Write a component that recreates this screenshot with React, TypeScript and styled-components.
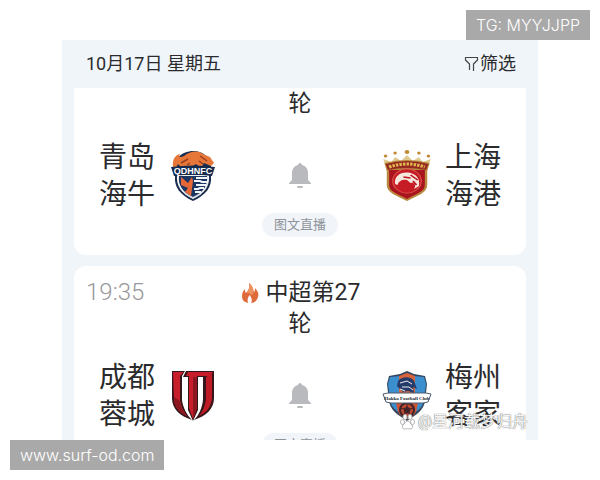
import * as React from 'react'
import styled, { createGlobalStyle } from 'styled-components'

const GlobalStyle = createGlobalStyle`
  * {
    box-sizing: border-box;
  }

  body {
    margin: 0;
    background-color: #fff;
    color: #2b2b2d;
    font-family: Roboto, 'Noto Sans CJK SC', sans-serif;
  }
`

const Page = styled.main`
  position: relative;
  height: 100vh;
  padding: 40px 62px;
  overflow: hidden;
`

const Screen = styled.section`
  position: relative;
  height: 100%;
  padding: 0 12px;
  overflow: hidden;
  background-color: #eff5f9;
`

const TopBar = styled.header`
  display: flex;
  justify-content: space-between;
  align-items: center;
  height: 48px;
  padding: 0 10px 0 12px;
  font-size: 18px;
`

const DateText = styled.time`
  line-height: 24px;
`

const FilterButton = styled.button`
  display: flex;
  align-items: center;
  gap: 1px;
  padding: 0;
  border: 0;
  background: none;
  color: inherit;
  font: inherit;
  line-height: 24px;
  cursor: pointer;
`

const MatchList = styled.div`
  display: flex;
  flex-direction: column;
  gap: 11px;
`

const Card = styled.article<{ $cut?: boolean }>`
  padding: ${({ $cut }) => ($cut ? '0 12px 18px' : '11px 12px 18px')};
  border-radius: ${({ $cut }) => ($cut ? '0 0 12px 12px' : '12px')};
  background-color: #fff;
`

const CardTop = styled.div`
  display: grid;
  grid-template-columns: 1fr 128px 1fr;
  line-height: 31px;
`

const Kickoff = styled.time`
  color: #98989a;
  font-size: 24px;
  font-weight: 300;
`

const Round = styled.h2`
  grid-column: 2;
  margin: 0;
  font-size: 23px;
  font-weight: 400;
  text-align: center;

  svg {
    margin-right: 6px;
    vertical-align: -4px;
  }
`

const Teams = styled.div`
  display: grid;
  grid-template-columns: 1fr 76px 1fr;
  align-items: center;
  margin-top: 20px;
`

const Team = styled.div<{ $away?: boolean }>`
  display: flex;
  flex-direction: ${({ $away }) => ($away ? 'row-reverse' : 'row')};
  align-items: center;
  gap: 12px;
  padding: 0 12px;
`

const TeamName = styled.span`
  width: 58px;
  font-size: 28px;
  line-height: 37px;
  text-align: center;
`

const BellButton = styled.button`
  justify-self: center;
  padding: 0;
  border: 0;
  background: none;
  line-height: 0;
  cursor: pointer;
`

const LiveButton = styled.button`
  display: block;
  margin: 0 auto;
  padding: 0 12px;
  border: 0;
  border-radius: 12px;
  background-color: #f1f5f9;
  color: #8e949b;
  font: inherit;
  font-size: 13px;
  line-height: 24px;
  cursor: pointer;
`

const Credit = styled.div`
  position: absolute;
  right: 10px;
  bottom: 8px;
  display: flex;
  align-items: center;
  gap: 3px;
  color: #f4f4f4;
  font-size: 16px;
  line-height: 20px;
  text-shadow: 0 0 1px #777, 0 0 1px #888;
`

const Tag = styled.div<{ $corner: 'top' | 'bottom' }>`
  position: absolute;
  ${({ $corner }) =>
    $corner === 'top' ? 'top: 10px; right: 10px;' : 'bottom: 10px; left: 10px;'}
  padding: 0 10px;
  background-color: #a9a9a9;
  color: #fff;
  font-family: Inter, 'Liberation Sans', sans-serif;
  font-size: 16px;
  font-weight: 300;
  line-height: 30px;
`

const FilterIcon = () => (
  <svg width="15" height="16" viewBox="0 0 15 16" fill="none" stroke="#444" strokeWidth="1.2">
    <path d="M5.5 14V8L1.5 4V1.5H13.5V4L9.5 8V15" strokeLinejoin="round" />
  </svg>
)

const FlameIcon = () => (
  <svg width="20" height="22" viewBox="0 0 20 22">
    <path
      d="M9 1C13 4 13 7 14 10C15 9 15 8 15 6C18 9 19 12 18 15C17 19 14 21 11 21C13 18 11 16 10 13C8 15 7 17 8 21C4 20 2 18 2 14C2 11 3 9 5 7C5 9 5 10 6 11C9 8 10 5 9 1Z"
      fill="#df6b3c"
    />
    <path d="M9 1C13 4 13 7 14 10L12 13L9 11L6 11C9 8 10 5 9 1Z" fill="#ee9262" />
  </svg>
)

const BellIcon = () => (
  <svg width="24" height="26" viewBox="0 0 24 26" fill="#b9babd">
    <path d="M12 0C13 0 14 1 14 2C18 3 20 6 20 10V17L23 20V21H1V20L4 17V10C4 6 6 3 10 2C10 1 11 0 12 0Z" />
    <rect x="9" y="23" width="6" height="2" rx="1" />
  </svg>
)

const QingdaoCrest = () => (
  <svg width="50" height="52" viewBox="0 0 50 52">
    <path d="M8 9C14 3 19 1 26 1C34 1 40 6 43 13V26C44 37 38 45 25 51C12 45 6 37 7 26Z" fill="#192c50" />
    <path d="M9 25H41C42 36 37 43 25 49C13 43 8 36 9 25Z" fill="#f5f5f6" />
    <path d="M11 26H39C40 35 36 42 25 47C14 42 10 35 11 26Z" fill="#1d3562" />
    <path
      d="M28 28H39M26 31H32L34 32H39M28 35H38M26 39H30L32 38H36M27 42H33"
      stroke="#f1f4f8"
      strokeWidth="2"
      fill="none"
    />
    <path d="M13 27L20 33L24 27L25 31L23 46L17 42L20 38L13 35Z" fill="#e66837" />
    <path
      d="M5 17C4 10 7 5 12 4C10 7 12 8 16 6C22 1 30 0 35 4L42 7L46 13L43 16L36 13L33 18L28 14L22 18H14L10 14L8 18Z"
      fill="#e77738"
    />
    <path d="M13 13L20 9M19 15L22 13M32 6L39 11M31 11L35 14" stroke="#963d20" strokeWidth="1.5" fill="none" />
    <path d="M3 17Q25 14 47 17L44 26Q25 23 6 26Z" fill="#172b4e" />
    <text x="25" y="24" textAnchor="middle" fill="#fff" fontFamily="Liberation Sans" fontSize="9" fontWeight="700">
      QDHNFC
    </text>
    <path d="M17 44L25 48L33 44" stroke="#cfd4dc" fill="none" />
  </svg>
)

const ShanghaiCrest = () => (
  <svg width="50" height="52" viewBox="2 0 42 52" preserveAspectRatio="none">
    <path d="M5 16L3 9L10 12L13 7L18 11L23 5L28 11L33 7L36 12L43 9L41 16Z" fill="#dfc98e" />
    <g fill="#c28a35">
      <circle cx="5" cy="6" r="1.5" />
      <circle cx="13" cy="3" r="1.5" />
      <circle cx="23" cy="2" r="2" />
      <circle cx="33" cy="3" r="1.5" />
      <circle cx="41" cy="6" r="1.5" />
    </g>
    <path d="M4 13Q23 7 42 13L40 21V35C40 43 31 46 23 51C15 46 6 43 6 35V21Z" fill="#b8893e" />
    <path d="M8 20H38V35C38 42 30 44 23 49C16 44 8 42 8 35Z" fill="#a9141e" />
    <path d="M5 14Q23 8 41 14L39 20Q23 16 7 20Z" fill="#962a20" />
    <path d="M8 17Q23 11 38 17" stroke="#e2b851" strokeWidth="3" strokeDasharray="2 1" fill="none" />
    <circle cx="23" cy="31" r="12" fill="#c61c26" stroke="#d9534b" />
    <path
      d="M13 34C12 26 18 21 26 23C32 25 34 30 33 36L29 39C31 35 29 32 26 33L23 30C19 29 16 31 15 35Z"
      fill="#f7e8df"
    />
    <path d="M20 27L26 28M26 25L32 30M28 31L31 35" stroke="#bd1822" strokeWidth="1.5" fill="none" />
  </svg>
)

const ChengduCrest = () => (
  <svg width="50" height="52" viewBox="-4 0 50 52">
    <path d="M0 1H13L10 6V30C11 38 15 45 20 50C8 46 0 39 0 28Z" fill="#35171b" />
    <path d="M14 1H42V28C42 39 34 46 22 50C27 45 30 38 31 30V7H26V40L21 51L16 40V7H11Z" fill="#35171b" />
    <path d="M1 2H12L8 6V30C9 37 12 42 15 46C6 42 2 36 2 28Z" fill="#c81e2b" />
    <path d="M16 2H41L38 6H25V38L21 49L17 38V6H14Z" fill="#c81e2b" />
    <path d="M40 4V28C39 37 35 42 27 46C31 41 33 36 34 30V7Z" fill="#c01a27" />
    <path d="M21 7H25V38L21 49Z" fill="#8d1721" />
    <path d="M2 27L8 31L9 34C10 39 12 42 15 46C6 42 2 36 2 27Z" fill="#8d1721" />
  </svg>
)

const MeizhouCrest = () => (
  <svg width="50" height="52" viewBox="0 0 50 52">
    <path d="M7 6L18 4L25 1L32 4L43 6L45 14L43 31C42 40 34 45 25 51C16 45 8 40 7 31L5 14Z" fill="#34465c" />
    <path d="M8 7L18 6V43C11 39 8 34 8 28L6 14ZM42 7L32 6V43C39 39 42 34 42 28L44 14Z" fill="#3c8fce" />
    <path d="M17 6L25 3L33 6V44L25 49L17 44Z" fill="#d8633d" />
    <path d="M16 11C20 6 29 6 32 11L35 19L31 17L32 23L26 21L21 22L15 16Z" fill="#253b69" />
    <path d="M18 13L25 11L30 14M20 17L27 17L31 20M18 19L23 21" stroke="#edf0f7" fill="none" />
    <path d="M14 33H36L34 42L25 49L16 42Z" fill="#ca5537" />
    <circle cx="25" cy="40" r="7" fill="#ba4930" stroke="#40222a" strokeWidth="2" />
    <path
      d="M25 37L28 39L27 43H23L22 39ZM25 33V37M28 39L32 38M27 43L29 46M23 43L21 46M22 39L18 38"
      stroke="#40222a"
      fill="#40222a"
    />
    <path d="M1 24L6 23H44L49 24L46 32L41 33H9L4 32Z" fill="#fff" stroke="#4a5c70" />
    <text x="25" y="30" textAnchor="middle" fill="#20262e" fontFamily="Liberation Serif" fontSize="5" fontWeight="700">
      Hakka Football Club
    </text>
  </svg>
)

const PawIcon = () => (
  <svg width="15" height="16" viewBox="0 0 15 16" fill="#fff" stroke="#b5b5b5">
    <ellipse cx="5" cy="3" rx="2" ry="2.5" />
    <ellipse cx="10" cy="3" rx="2" ry="2.5" />
    <ellipse cx="2.5" cy="8" rx="2" ry="2.5" />
    <ellipse cx="12.5" cy="8" rx="2" ry="2.5" />
    <path d="M7.5 7C10 7 10 10 12 11C14 14 11 16 7.5 14.5C4 16 1 14 3 11C5 10 5 7 7.5 7Z" />
  </svg>
)

interface TeamInfo {
  name: [string, string]
  crest: React.ReactNode
}

interface MatchProps {
  time?: string
  home: TeamInfo
  away: TeamInfo
}

const Match = ({ time, home, away }: MatchProps) => (
  <Card $cut={!time}>
    <CardTop>
      {time && <Kickoff>{time}</Kickoff>}
      <Round>
        {time && (
          <>
            <FlameIcon />
            中超第27
            <br />
          </>
        )}
        轮
      </Round>
    </CardTop>
    <Teams>
      <Team>
        <TeamName>
          {home.name[0]}
          <br />
          {home.name[1]}
        </TeamName>
        {home.crest}
      </Team>
      <BellButton aria-label="提醒">
        <BellIcon />
      </BellButton>
      <Team $away>
        <TeamName>
          {away.name[0]}
          <br />
          {away.name[1]}
        </TeamName>
        {away.crest}
      </Team>
    </Teams>
    <LiveButton>图文直播</LiveButton>
  </Card>
)

const App = () => (
  <>
    <GlobalStyle />
    <Page lang="zh-CN">
      <Screen>
        <TopBar>
          <DateText>10月17日 星期五</DateText>
          <FilterButton>
            <FilterIcon />
            筛选
          </FilterButton>
        </TopBar>
        <MatchList>
          <Match
            home={{ name: ['青岛', '海牛'], crest: <QingdaoCrest /> }}
            away={{ name: ['上海', '海港'], crest: <ShanghaiCrest /> }}
          />
          <Match
            time="19:35"
            home={{ name: ['成都', '蓉城'], crest: <ChengduCrest /> }}
            away={{ name: ['梅州', '客家'], crest: <MeizhouCrest /> }}
          />
        </MatchList>
        <Credit>
          <PawIcon />
          @星河载梦归舟
        </Credit>
      </Screen>
      <Tag $corner="top">TG: MYYJJPP</Tag>
      <Tag $corner="bottom">www.surf-od.com</Tag>
    </Page>
  </>
)

export default App
